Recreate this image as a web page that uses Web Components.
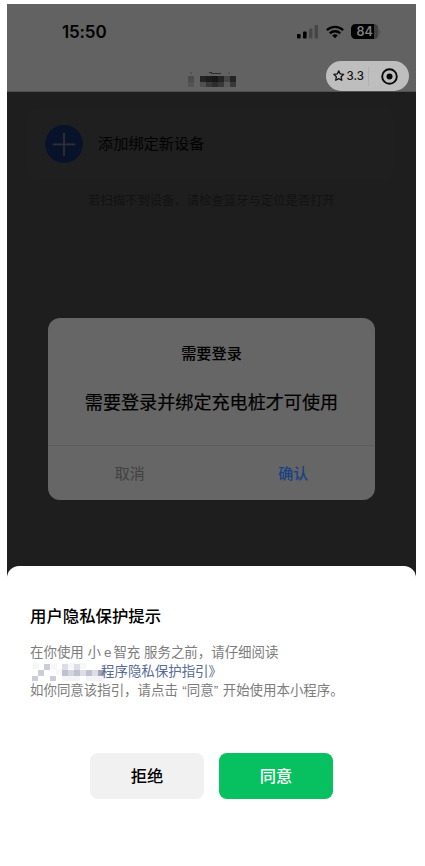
<!DOCTYPE html>
<html lang="zh-CN">
<head>
<meta charset="utf-8">
<title>添加设备</title>
<style>
html,body{margin:0;background:#fff}
body{font-family:"Liberation Sans","Noto Sans CJK SC",sans-serif;color:#000}
</style>
</head>
<body>
<phone-screen></phone-screen>
<script>
function define(name, html){
  const t=document.createElement('template');
  t.innerHTML=html;
  customElements.define(name,class extends HTMLElement{
    constructor(){super();this.attachShadow({mode:'open'}).appendChild(t.content.cloneNode(true));}
  });
}

define('status-bar',`<style>
:host{display:flex;height:54px;box-sizing:border-box;padding:20px 35px 0 55px;justify-content:space-between;align-items:flex-start}
.time{font:600 17px/17px Inter,sans-serif;letter-spacing:-.15px}
.icons{display:flex;align-items:center;gap:7.5px;height:15px}
svg{display:block}
text{font:600 12.5px Inter,sans-serif}
</style>
<span class="time">15:50</span>
<div class="icons">
<svg width="21" height="14" viewBox="0 0 21 14"><rect y="9" width="3.6" height="4.5" rx="1"/><rect x="6" y="6.5" width="3.6" height="7" rx="1"/><rect x="12" y="3.5" width="3.4" height="10" rx="1" fill="#464646"/><rect x="17.6" y="0" width="3.4" height="13.5" rx="1" fill="#464646"/></svg>
<svg width="18" height="14" viewBox="0 0 18 14" fill="none" stroke="#000" stroke-width="2.4"><path d="M.9 5.1a11.7 11.7 0 0 1 16.2 0M3.8 8.3a7.5 7.5 0 0 1 10.4 0"/><path d="M9 13.3 6.2 10.5a4 4 0 0 1 5.6 0Z" fill="#000" stroke="none"/></svg>
<svg width="30" height="15" viewBox="0 0 30 15"><path d="M23 0a4.5 4.5 0 0 1 4.3 4.5v6A4.5 4.5 0 0 1 23 15Z" fill="#414141"/><path d="M4.5 0H23v15H4.5A4.5 4.5 0 0 1 0 10.5v-6A4.5 4.5 0 0 1 4.5 0Z"/><path d="M28.3 5.2q1.7 2.3 0 4.6Z" fill="#464646"/><text x="5.4" y="12" fill="#808080">84</text></svg>
</div>`);

define('mosaic-title',`<style>:host{display:block;width:50px;height:16px}svg{display:block}</style>
<svg width="50" height="16" shape-rendering="crispEdges"><path fill="#4c4c4c" d="M1 4h6v6H1z"/><path fill="#535353" d="M1 10h6v5H1zM3 0h2v2H3zM41 0h2v2h-2z"/><path fill="#242424" d="M13 4h6v6h-6zM31 4h6v6h-6zM43 4h6v6h-6z"/><path fill="#1d1d1d" d="M19 4h6v6h-6z"/><path fill="#171717" d="M25 4h6v6h-6z"/><path fill="#242424" d="M37 4h6v6h-6z" opacity=".45"/><path fill="#505050" d="M13 10h6v5h-6z"/><path fill="#393939" d="M19 10h6v5h-6zM31 10h6v5h-6zM43 10h6v5h-6z"/><path fill="#2d2d2d" d="M25 10h6v5h-6zM22 0h3v1h-3zM24 1h10v1H24z"/><path fill="#5a5a5a" d="M37 10h6v5h-6z"/></svg>`);

define('app-capsule',`<style>
:host{display:flex;align-items:center;box-sizing:border-box;width:83px;height:30px;border-radius:15px;background:#bebebe;padding-left:7px}
span{font:500 11.5px/14px Inter,sans-serif;color:#111;margin-left:2px;width:21px}
i{width:1px;height:19px;background:#b0b0b0}
.t{margin-left:12px}svg{display:block;flex:none}
</style>
<svg width="11.5" height="11.5" viewBox="0 0 11 11" fill="none" stroke="#111" stroke-width="1.25" stroke-linejoin="round"><path d="m5.5.8 1.4 3 3.3.4-2.4 2.3.6 3.3-2.9-1.6-2.9 1.6.6-3.3L.8 4.2l3.3-.4Z"/></svg>
<span>3.3</span><i></i>
<svg class="t" width="17" height="17" viewBox="0 0 17 17"><circle cx="8.5" cy="8.5" r="7.3" fill="none" stroke="#080808" stroke-width="1.9"/><circle cx="8.5" cy="8.5" r="3" fill="#080808"/></svg>`);

define('nav-bar',`<style>
:host{display:block;height:88px;background:#626262;border-bottom:1px solid #505050;box-sizing:border-box}
.row{display:grid;grid-template-columns:180px 1fr auto;padding-right:7px;height:33px;align-items:start}
mosaic-title{margin-top:14px}app-capsule{margin-top:3px}
</style><status-bar></status-bar><div class="row"><span></span><mosaic-title></mosaic-title><app-capsule></app-capsule></div>`);

define('device-card',`<style>
:host{display:flex;align-items:center;height:71px;margin:16px 21px 0 20px;background:#1f1f1f;border-radius:10px;padding-left:18px;box-sizing:border-box;gap:15px}
svg{display:block}span{font-size:15.2px;line-height:22px;color:#020202}
</style>
<svg width="38" height="38" viewBox="0 0 38 38"><circle cx="19" cy="19" r="19" fill="#08132b"/><path d="M8.5 19.3h21M19 8.5v21.5" stroke="#303030" stroke-width="1.8" stroke-linecap="round"/></svg>
<span><slot></slot></span>`);

define('hint-text',`<style>:host{display:block;font-size:12.35px;line-height:18px;color:#121212;text-align:center;margin-top:13px;white-space:nowrap}</style><slot></slot>`);

define('login-dialog',`<style>
:host{display:flex;flex-direction:column;width:327px;height:182px;border-radius:12px;background:#666;text-align:center;white-space:nowrap;overflow:hidden}
.title{font-size:15.2px;line-height:22px;margin-top:25px;font-weight:500}
.body{font-size:18.1px;line-height:26px;margin-top:25px;font-weight:400;-webkit-text-stroke:.2px #000}
.foot{display:grid;grid-template-columns:1fr 1fr;margin-top:auto;height:54px;border-top:1px solid #5c5c5c;line-height:56px;font-size:15px}
.c{color:#414141}.o{color:#184282;font-weight:500}
</style>
<div class="title"><slot name="title"></slot></div><div class="body"><slot></slot></div>
<div class="foot"><span class="c"><slot name="cancel"></slot></span><span class="o"><slot name="ok"></slot></span></div>`);

define('sheet-button',`<style>
:host{display:block;width:114px;height:46px;border-radius:8px;background:#f1f1f1;color:#000;font-size:16.3px;font-weight:500;line-height:46px;text-align:center}
:host([primary]){background:#07c160;color:#fff}
</style><slot></slot>`);

define('blurred-name',`<style>:host{display:block;width:71px;height:19px}svg{display:block}</style>
<svg width="78" height="19" shape-rendering="crispEdges"><path fill="#f7f7f9" d="M3 1h6v6H3zM21 1h6v6h-6zM26 7h6v6h-6zM38 1h6v6h-6zM50 1h6v6h-6z"/><path fill="#cbcddb" d="M14 2h6v6h-6zM8 8h6v6H8zM2 14h6v5H2zM20 14h6v5h-6z"/><path fill="#dcdde6" d="M32 2h6v6h-6zM44 2h6v6h-6zM50 8h6v6h-6zM62 8h6v6h-6z"/><path fill="#bfc1cf" d="M32 8h6v6h-6zM44 8h6v6h-6zM56 8h6v6h-6z"/><path fill="#d3d4df" d="M38 8h6v6h-6z"/><path fill="#a2a7ba" d="M68 8h6v6h-6z"/><path fill="#f4f4f7" d="M32 14h18v5H32zM56 14h18v5H56z"/></svg>`);

define('privacy-sheet',`<style>
:host{display:block;flex:none;height:300px;box-sizing:border-box;background:#fff;border-radius:12px 12px 0 0;padding:38px 23px 0;margin-top:66px}
h1{margin:0;font-size:16.4px;line-height:24px;font-weight:500}
.copy{margin-top:15px;font-size:13.45px;line-height:19px;color:#7d7d7d;white-space:nowrap}
.copy div{display:flex;height:19px}
.link{color:#576b95}
.e{padding:0 2px 0 3px}
.q{display:inline-block;width:9px}
.open{text-align:right}
.actions{display:flex;justify-content:center;gap:15px;margin-top:53px}
</style>
<h1>用户隐私保护提示</h1>
<div class="copy"><div><span>在你使用 小<span class="e">e</span>智充 服务之前，请仔细阅读</span></div>
<div><blurred-name></blurred-name><span class="link">程序隐私保护指引》</span></div>
<div><span>如你同意该指引，请点击<span class="q open">“</span>同意<span class="q">”</span>开始使用本小程序。</span></div></div>
<div class="actions"><sheet-button>拒绝</sheet-button><sheet-button primary>同意</sheet-button></div>`);

define('phone-screen',`<style>
:host{display:block;box-sizing:border-box;width:409px;margin-left:7px;padding-top:4px;height:866px;overflow:hidden}
.screen{background:linear-gradient(#1e1e1e 600px,#fff 600px);height:862px;display:flex;flex-direction:column}
login-dialog{margin:108px 0 0 41px;flex:none}
</style>
<div class="screen"><nav-bar></nav-bar><device-card>添加绑定新设备</device-card><hint-text>若扫描不到设备，请检查蓝牙与定位是否打开</hint-text>
<login-dialog><span slot="title">需要登录</span>需要登录并绑定充电桩才可使用<span slot="cancel">取消</span><span slot="ok">确认</span></login-dialog>
<privacy-sheet></privacy-sheet></div>`);
</script>
</body>
</html>
